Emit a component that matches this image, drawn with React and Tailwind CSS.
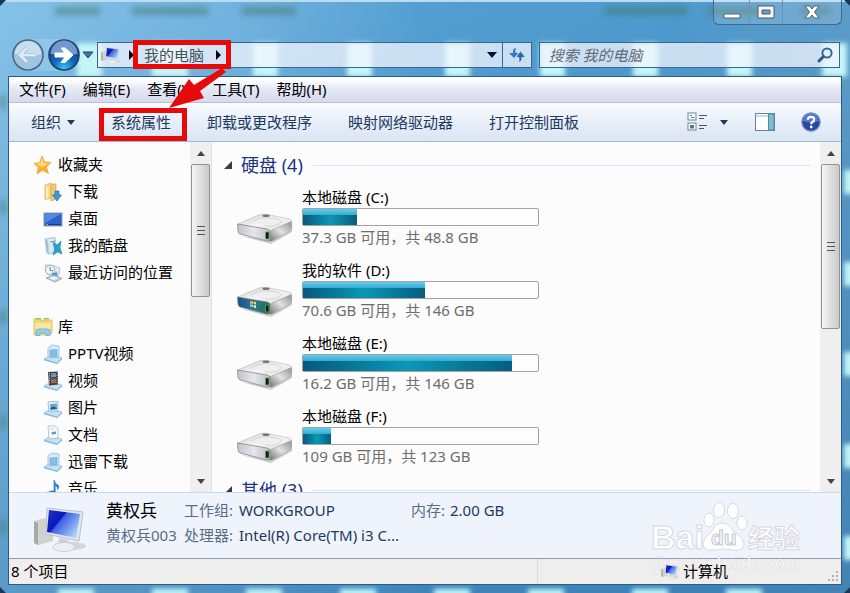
import React from 'react';

const menus = ['文件(F)', '编辑(E)', '查看(V)', '工具(T)', '帮助(H)'];

const favorites = [
  { name: '下载', icon: 'downloads' },
  { name: '桌面', icon: 'desktop' },
  { name: '我的酷盘', icon: 'kupan' },
  { name: '最近访问的位置', icon: 'recent' },
];

const libraries = [
  { name: 'PPTV视频', icon: 'folderLib' },
  { name: '视频', icon: 'video' },
  { name: '图片', icon: 'picture' },
  { name: '文档', icon: 'document' },
  { name: '迅雷下载', icon: 'folderLib' },
  { name: '音乐', icon: 'music' },
];

const drives = [
  { name: '本地磁盘 (C:)', detail: '37.3 GB 可用，共 48.8 GB', used: 23 },
  { name: '我的软件 (D:)', detail: '70.6 GB 可用，共 146 GB', used: 52, system: true },
  { name: '本地磁盘 (E:)', detail: '16.2 GB 可用，共 146 GB', used: 89 },
  { name: '本地磁盘 (F:)', detail: '109 GB 可用，共 123 GB', used: 12 },
];

/* ---------- icons ---------- */

const LibraryBase = () => (
  <>
    <path d="M1 15 L6 12 L19 14 L14 19 Z" fill="#c4e2f5" stroke="#8bb7d6" strokeWidth="0.7" />
    <path d="M1 15 L14 19 L19 14 V15.5 L14 20 L1 16.2 Z" fill="#7fb3da" />
  </>
);

const iconShapes = {
  star: (
    <>
      <path d="M9 1 L11.5 7 L18 7.5 L13.4 12 L15.5 18.5 L9.6 15.2 L4 19 L5.2 12.5 L1 8.6 L6.8 7.4 Z" fill="#fcb02f" stroke="#f0a040" strokeWidth="0.8" />
      <path d="M9 3 L10.8 8 L15 8.4 L9 12 L3 9 L7.4 8 Z" fill="#ffdf80" />
    </>
  ),
  downloads: (
    <>
      <path d="M2 3 L8 1 V16 L2 17.5 Z" fill="#f6dc8c" stroke="#d2b060" strokeWidth="0.7" />
      <path d="M8 2 H13 V17 L8 19 Z" fill="#efcd70" stroke="#cfa94d" strokeWidth="0.7" />
      <path d="M4 5 V16" stroke="#fff4c8" strokeWidth="1.5" />
      <path d="M12 9 H16 V13 H18.5 L14 19 L9.5 13 H12 Z" fill="#3a9ad9" stroke="#2174b4" strokeWidth="0.7" />
    </>
  ),
  desktop: (
    <>
      <rect x="1" y="4" width="18" height="13" fill="#2f62c9" stroke="#8a9fbd" />
      <path d="M2 5 H18 L2 14 Z" fill="#5288e6" />
      <path d="M2 15.5 H18" stroke="#1c3a80" />
      <path d="M3 15.5 H5" stroke="#67c46b" />
    </>
  ),
  kupan: (
    <>
      <path d="M2 3 L12 1.5 L14 16 L5 18 Z" fill="#dbe8f1" stroke="#9cb2c4" strokeWidth="0.8" />
      <path d="M2 3 L5 5 L6 18 L3 16 Z" fill="#a9bed0" />
      <path d="M7 6 L12 5" stroke="#7d9bb5" />
      <path d="M10 6 L14 9 L18 5 L17 11.5 L19 18 L14.5 16 L10 19 L11.5 13 Z" fill="#26a5c4" stroke="#168aa8" strokeWidth="0.6" />
    </>
  ),
  recent: (
    <>
      <path d="M2 2 H9 L17 5 L16 12 L5 12 Z" fill="#dfe9ee" stroke="#b0bec6" strokeWidth="0.8" />
      <circle cx="7" cy="7" r="4.6" fill="#eff7fa" stroke="#9db3c0" strokeWidth="1" />
      <path d="M7 4 V7 L10 8" fill="none" stroke="#5c7c90" strokeWidth="1" />
      <path d="M8 10 L14 8.5 L15 13 L9 14.5 Z" fill="#4b9cc6" stroke="#ccd9e0" />
      <path d="M3 15 L11 12 L19 15.5 L12 19 Z" fill="#c7d2d8" stroke="#8d9ba4" strokeWidth="0.8" />
      <path d="M6 15 L11 13.5 L15 15 L11 17 Z" fill="#eff4f6" />
    </>
  ),
  library: (
    <>
      <path d="M1 2 L5 1 L7 3 H19 V16 L16 18 H1 Z" fill="#f1d57d" stroke="#d9ba62" strokeWidth="0.8" />
      <path d="M3 1.8 H8 M11 1.8 H16" stroke="#9cc56b" strokeWidth="1.5" />
      <path d="M2 6 H18 V12 H2 Z" fill="#fae7a0" />
      <path d="M3 18.5 V14.5 Q3 12 6 12 H14 Q17 12 17 14.5 V18.5 H13 V16 H7 V18.5 Z" fill="#93cdee" stroke="#6aadd6" strokeWidth="0.8" />
    </>
  ),
  folderLib: (
    <>
      <LibraryBase />
      <path d="M5 4 L9 1 L16 2 V13 L8 14 L5 13 Z" fill="#d6ebf9" stroke="#93bbd6" strokeWidth="0.8" />
      <path d="M7 6 L14 5.5 V12.5 L7 13 Z" fill="#82bee6" stroke="#6aa6d0" strokeWidth="0.6" />
    </>
  ),
  video: (
    <>
      <LibraryBase />
      <path d="M5 1 L15 0.5 V13.5 L6 14.5 Z" fill="#3a3f4b" />
      <path d="M8 2.5 L13 2 V6 L8 6.5 Z" fill="#7194b5" />
      <path d="M8 8 L13 7.5 V12 L8 12.5 Z" fill="#a5654b" />
      <path d="M6.5 2 V14 M14.2 1.5 V13" stroke="#dfe4ea" strokeWidth="1" strokeDasharray="1 1.4" />
    </>
  ),
  picture: (
    <>
      <LibraryBase />
      <path d="M5 4 L15 3.5 V12.5 L6 13.5 Z" fill="#f1f8fd" stroke="#84aecd" strokeWidth="0.8" />
      <path d="M7 6 L14 5.5 V11 L7.5 11.8 Z" fill="#66a9d6" />
      <path d="M7.3 10 L10 8.5 L14 10 V11 L7.5 11.8 Z" fill="#2c5975" />
    </>
  ),
  document: (
    <>
      <LibraryBase />
      <path d="M5 1 L12 1 L15 3.5 V13 L6 14 Z" fill="#f6fafd" stroke="#a5bccd" strokeWidth="0.8" />
      <path d="M7 4 H11" stroke="#b5c8d6" strokeWidth="0.8" />
      <path d="M8.5 7 L13 6.5 V9 L9 9.5 Z" fill="#6b97be" />
    </>
  ),
  music: (
    <>
      <LibraryBase />
      <path d="M11 13 V1 Q12 5 15.5 6.5 Q16.5 9 14.5 10.5 Q15 7.5 12.2 6.5 V13.5" fill="#2f83bf" stroke="#2f83bf" strokeWidth="0.7" />
      <ellipse cx="9.5" cy="13.8" rx="3.2" ry="2.3" fill="#2a7bb8" />
    </>
  ),
};

const Icon = ({ name }) => (
  <svg viewBox="0 0 20 20" className="size-5 shrink-0" aria-hidden="true">
    {iconShapes[name]}
  </svg>
);

const ComputerIcon = ({ className, id }) => (
  <svg viewBox="0 0 54 46" className={className} aria-hidden="true">
    <defs>
      <linearGradient id={id} x1="0" y1="0" x2="1" y2="0.7">
        <stop offset="0" stopColor="#1c34c4" />
        <stop offset="0.42" stopColor="#0b18bd" />
        <stop offset="0.46" stopColor="#3c5ee2" />
        <stop offset="1" stopColor="#a9d3f8" />
      </linearGradient>
    </defs>
    <ellipse cx="38" cy="39" rx="15" ry="4" fill="#d3d6da" />
    <path d="M1 14 L12 11 L20 14 V34 L6 38 L1 36 Z" fill="#d2d3ce" />
    <path d="M1 14 L5 16 V38 L1 36 Z" fill="#a7a9a4" />
    <path d="M14 1 L50 5 L46 34 L13 27 Z" fill="#dfe5ee" stroke="#bcc2cc" strokeWidth="1" />
    <path d="M16 3 L47 7 L43 31 L14 25 Z" fill={`url(#${id})`} />
    <path d="M26 31 L36 33 L36 39 L25 38 Z" fill="#cdd1d7" />
    <ellipse cx="31" cy="40" rx="11" ry="4.5" fill="#eceef1" stroke="#c3c7ce" strokeWidth="0.8" />
  </svg>
);

const DriveIcon = ({ system, id }) => (
  <svg viewBox="0 0 58 34" className="w-[58px] h-[34px]" aria-hidden="true">
    <defs>
      <linearGradient id={`${id}-top`} x1="0" y1="0" x2="1" y2="1">
        <stop offset="0" stopColor="#cfcfcf" />
        <stop offset="0.5" stopColor="#f5f5f5" />
        <stop offset="1" stopColor="#dedede" />
      </linearGradient>
      <linearGradient id={`${id}-front`} x1="0" y1="0" x2="1" y2="0">
        <stop offset="0" stopColor={system ? '#1d4f88' : '#c2c2ca'} />
        <stop offset="0.5" stopColor={system ? '#2c7896' : '#e6e6ed'} />
        <stop offset="1" stopColor={system ? '#1c7347' : '#bcc0bc'} />
      </linearGradient>
      <linearGradient id={`${id}-side`} x1="0" y1="1" x2="1" y2="0">
        <stop offset="0" stopColor="#707070" />
        <stop offset="0.5" stopColor="#e2e2e2" />
        <stop offset="1" stopColor="#909090" />
      </linearGradient>
    </defs>
    <path d="M5 24 L35 32 L56 20 L56 13 L34 28 Z" fill="#000" opacity="0.18" />
    <path d="M2 12 L23 3 Q27 1.5 31 2.5 L53 7 Q56 8 55 10 L34 19 Q32 20 29 19 Z" fill={`url(#${id}-top)`} stroke="#b3b3b3" strokeWidth="0.6" />
    <path d="M16 10 Q22 5 34 6 Q46 7 45 10 Q42 15 29 14" fill="#efefef" stroke="#cdcdcd" strokeWidth="0.8" />
    <ellipse cx="30" cy="3.8" rx="3.6" ry="1.3" fill="#777" />
    <path d="M34 19 L55.5 9.5 Q56.5 17 54 19 L37 28.5 Q34 30 33 28 Z" fill={`url(#${id}-side)`} stroke="#999" strokeWidth="0.5" />
    <path d="M1.5 12 L31 17 Q34 17.5 34 20 V27 Q34 29.5 31 29 L4 22 Q2 21 2 19 Z" fill={`url(#${id}-front)`} stroke="#7c7c7c" strokeWidth="0.7" />
    <path d="M29.5 20 H33 V27 H29.5 Z" fill="#161b16" stroke="#61a565" strokeWidth="0.8" />
    {system && (
      <>
        <path d="M14 16 L17 16.5 V19 L14 18.4 Z" fill="#ffb44a" />
        <path d="M17.7 16.7 L20 17.1 V19.6 L17.7 19.1 Z" fill="#c7ee6c" />
        <path d="M14 19.2 L17 19.8 V22.2 L14 21.5 Z" fill="#7fd1f2" />
        <path d="M17.7 19.9 L20 20.4 V23 L17.7 22.4 Z" fill="#fff08a" />
      </>
    )}
  </svg>
);

const Caret = ({ className }) => (
  <svg viewBox="0 0 10 6" className={className} aria-hidden="true">
    <path d="M0 0 H10 L5 6 Z" fill="currentColor" />
  </svg>
);

const RightCaret = () => (
  <svg viewBox="0 0 5 10" className="w-[5px] h-[10px] shrink-0" aria-hidden="true">
    <path d="M0 0 L5 5 L0 10 Z" fill="#000" />
  </svg>
);

/* ---------- desktop seen through the glass frame ---------- */

const Wallpaper = () => (
  <svg viewBox="0 0 850 593" preserveAspectRatio="none" className="absolute inset-0 -z-10 w-full h-full" aria-hidden="true">
    <defs>
      <linearGradient id="sky" x1="0" y1="0" x2="1" y2="0">
        <stop offset="0" stopColor="#84c2e8" />
        <stop offset="0.3" stopColor="#70b1de" />
        <stop offset="0.5" stopColor="#539fd2" />
        <stop offset="0.8" stopColor="#4f9acd" />
        <stop offset="1" stopColor="#5c9cc9" />
      </linearGradient>
      <linearGradient id="depth" x1="0" y1="0" x2="0" y2="1">
        <stop offset="0" stopColor="#1c5f98" stopOpacity="0" />
        <stop offset="1" stopColor="#1c5f98" stopOpacity="0.4" />
      </linearGradient>
      <filter id="soft" x="-50%" y="-50%" width="200%" height="200%"><feGaussianBlur stdDeviation="2.5" /></filter>
      <filter id="smudge" x="-50%" y="-100%" width="200%" height="300%"><feGaussianBlur stdDeviation="3" /></filter>
    </defs>
    <rect width="850" height="593" fill="url(#sky)" />
    <rect width="850" height="593" fill="url(#depth)" />
    <g filter="url(#soft)" fill="#c4f6f8">
      {[77, 152, 253, 347, 445, 540, 633, 727, 822].map((x) => (
        <rect key={x} x={x} y="43" width={x === 152 ? 36 : 25} height="34" />
      ))}
      {[58, 152, 246, 340, 434, 528, 632, 726].map((x) => (
        <rect key={x} x={x} y="589" width="36" height="8" />
      ))}
      {[170, 262, 352, 444, 536].map((y) => (
        <rect key={y} x="844" y={y} width="10" height="24" />
      ))}
    </g>
    <g filter="url(#smudge)" fill="#3f7365" opacity="0.5">
      {[[55, 45], [132, 76], [242, 54], [605, 82], [708, 60], [800, 30]].map(([x, w]) => (
        <rect key={x} x={x} y="7" width={w} height="8" />
      ))}
      {[95, 200, 310, 415, 520].map((y) => (
        <rect key={y} x="0" y={y} width="6" height="14" />
      ))}
    </g>
    <path d="M0 1 H850" stroke="#b9dcf0" strokeWidth="2" />
    <path d="M0 6 V0 H6 Z M844 0 H850 V6 Z M0 587 V593 H6 Z M850 587 V593 H844 Z" fill="#1d3558" />
  </svg>
);

/* ---------- window parts ---------- */

const CaptionButtons = () => (
  <div className="flex h-[25px] w-[129px] rounded-b-md border border-t-0 border-[#41698c] bg-white/15 divide-x divide-[#6e94b2]">
    <button aria-label="最小化" className="w-9 flex items-center justify-center">
      <svg viewBox="0 0 18 14" className="w-[18px] h-[14px]"><rect x="1" y="9" width="16" height="4" fill="#fff" stroke="#5b6775" /></svg>
    </button>
    <button aria-label="最大化" className="w-[33px] flex items-center justify-center">
      <svg viewBox="0 0 18 14" className="w-[18px] h-[14px]">
        <path d="M1 1 H17 V13 H1 Z M5 5 V9 H13 V5 Z" fill="#f4f6f8" fillRule="evenodd" stroke="#4d5b6a" />
      </svg>
    </button>
    <button aria-label="关闭" className="flex-1 flex items-center justify-center">
      <svg viewBox="0 0 16 14" className="w-4 h-[14px]">
        <path d="M1 1 H5.5 L8 4 L10.5 1 H15 L10.5 7 L15 13 H10.5 L8 10 L5.5 13 H1 L5.5 7 Z" fill="#fff" stroke="#56616e" />
      </svg>
    </button>
  </div>
);

const NavButtons = () => (
  <div className="flex items-center gap-1 rounded-full bg-white/15 shrink-0">
    <button aria-label="后退">
      <svg viewBox="0 0 32 32" className="size-8">
        <circle cx="16" cy="16" r="15" fill="#9fc5df" stroke="#4a6782" strokeWidth="1.6" />
        <path d="M3 15 A13 13 0 0 1 29 15 Q16 19 3 15" fill="#d5e6f2" opacity="0.75" />
        <path d="M15 9 L8 16 L15 23 M8.5 16 H24" fill="none" stroke="#8fb0c8" strokeWidth="4" />
        <path d="M15 9 L8 16 L15 23 M8.5 16 H24" fill="none" stroke="#dcebf5" strokeWidth="3" />
      </svg>
    </button>
    <button aria-label="前进">
      <svg viewBox="0 0 32 32" className="size-8">
        <defs>
          <radialGradient id="fwd" cx="0.5" cy="0.95" r="0.75">
            <stop offset="0" stopColor="#35c6f6" />
            <stop offset="0.5" stopColor="#1565bb" />
            <stop offset="1" stopColor="#103f8e" />
          </radialGradient>
        </defs>
        <circle cx="16" cy="16" r="15" fill="url(#fwd)" stroke="#203f6b" strokeWidth="1.6" />
        <path d="M2.5 15 A13.5 13.5 0 0 1 29.5 15 Q16 17 2.5 15" fill="#a9c8ec" opacity="0.65" />
        <path d="M7 14 H17 L13 9 H17 L25 16 L17 23.5 H13 L17 18 H7 Z" fill="#fff" stroke="#fff" strokeLinejoin="round" />
      </svg>
    </button>
  </div>
);

const AddressRow = () => (
  <div className="flex items-center h-[34px] pl-3 pr-[10px]">
    <NavButtons />
    <button aria-label="最近浏览的位置" className="px-[2px] mr-px">
      <svg viewBox="0 0 12 8" className="w-3 h-2"><path d="M1 1 H11 L6 7 Z" fill="#3d739e" stroke="#1f4b74" /></svg>
    </button>
    <div className="flex flex-[435] h-[26px] border border-[#39678f] bg-[#f3f6fe]/75">
      <div className="flex flex-1 items-center pl-[3px]">
        <ComputerIcon id="addrScreen" className="w-5 h-[17px] mr-2" />
        <RightCaret />
        {/* highlighted crumb */}
        <div className="relative flex items-center ml-[10px]">
          <button className="text-[15px] leading-5 text-[#4a4f5a] whitespace-nowrap mr-3">我的电脑</button>
          <RightCaret />
          <div className="absolute -left-[11px] -right-[10px] -top-[5px] -bottom-1 border-[5px] border-[#e60a0a]" />
        </div>
        <button aria-label="以前的位置" className="ml-auto mr-[5px]">
          <Caret className="w-[10px] h-[6px] text-[#0b0b3c]" />
        </button>
      </div>
      <button aria-label="刷新" className="w-[29px] border-l border-[#39678f] flex items-center justify-center">
        <svg viewBox="0 0 18 16" className="w-[18px] h-4">
          <path d="M8 1 Q4.5 1.5 5 6 H1 L6 11 L10.5 6 H7.6 Q7 3.5 8 1 Z" fill="#3a77c2" />
          <path d="M11 15 Q14 14 13.5 10 H16.8 L12.6 4.5 L8.5 10 H11 Q12 13 11 15 Z" fill="#2a67b4" />
        </svg>
      </button>
    </div>
    <label className="flex flex-[301] min-w-0 items-center h-[26px] ml-[7px] border border-[#39678f] bg-[#f3f6fe]/75">
      <input
        type="text"
        aria-label="搜索"
        placeholder="搜索 我的电脑"
        className="flex-1 min-w-0 h-full px-[9px] bg-transparent text-[15px] italic outline-none placeholder:text-[#666d78]"
      />
      <svg viewBox="0 0 16 16" className="size-4 mr-[6px]" aria-hidden="true">
        <circle cx="10" cy="6" r="4.6" fill="#e4f0f8" stroke="#366a93" strokeWidth="2" />
        <path d="M6.5 9.5 L2 14" stroke="#2f5a82" strokeWidth="3" strokeLinecap="round" />
      </svg>
    </label>
  </div>
);

const Toolbar = () => (
  <div className="flex items-center h-[39px] shrink-0 pl-[22px] pr-5 border-b border-[#a9b8ce] bg-linear-to-b from-[#fafcff] via-[#e7eff9] via-50% to-[#dae5f3] text-[15px] text-[#1e395b] whitespace-nowrap">
    <button className="flex items-center gap-[6px]">
      组织 <Caret className="w-2 h-[5px]" />
    </button>
    <div className="relative ml-9">
      <button>系统属性</button>
      <div className="absolute -left-3 -right-4 -top-[3px] -bottom-2 border-[5px] border-[#e60a0a]" />
    </div>
    <button className="ml-9">卸载或更改程序</button>
    <button className="ml-9">映射网络驱动器</button>
    <button className="ml-9">打开控制面板</button>
    <div className="flex items-center ml-auto">
      <button aria-label="更改您的视图" className="flex items-center gap-3">
        <svg viewBox="0 0 21 20" className="w-[21px] h-5">
          <rect x="1" y="1" width="8" height="7" fill="#fff" stroke="#6b859c" />
          <path d="M3 3.5 H5 M4 5.5 H7.5" stroke="#3890b0" />
          <rect x="1" y="11" width="8" height="7" fill="#fff" stroke="#6b859c" />
          <rect x="3" y="13" width="4" height="3.5" fill="#468065" />
          <path d="M12 3.5 H20 M12 6.5 H17 M12 13.5 H20 M12 16.5 H17" stroke="#45566a" />
        </svg>
        <Caret className="w-2 h-[5px]" />
      </button>
      <button aria-label="显示预览窗格" className="ml-[27px]">
        <svg viewBox="0 0 20 18" className="w-5 h-[18px] block">
          <rect x="0.5" y="0.5" width="19" height="17" fill="#fff" stroke="#64829f" />
          <path d="M1 3 H14" stroke="#9fb4c8" />
          <rect x="13.5" y="1" width="5.5" height="16" fill="#7fbccf" stroke="#4f8ba5" />
        </svg>
      </button>
      <button aria-label="获取帮助" className="ml-[26px]">
        <svg viewBox="0 0 20 20" className="size-5 block">
          <circle cx="10" cy="10" r="9.2" fill="#2447a8" stroke="#8195b8" strokeWidth="1.2" />
          <path d="M2 9 A8 8 0 0 1 18 9 Q10 12 2 9" fill="#6686d2" opacity="0.8" />
          <path d="M6.8 7.8 Q7 4.8 10 4.8 Q13.2 4.8 13.2 7.4 Q13.2 9 11.4 10 Q10.2 10.7 10.2 12.2" fill="none" stroke="#fff" strokeWidth="2.2" />
          <circle cx="10.2" cy="15" r="1.4" fill="#fff" />
        </svg>
      </button>
    </div>
  </div>
);

const ScrollBar = ({ thumb, className }) => (
  <div className={`flex flex-col items-center shrink-0 bg-[#efefef] text-[#444] ${className}`} aria-hidden="true">
    <div className="h-[22px] flex items-center">
      <Caret className="w-2 h-[5px] rotate-180" />
    </div>
    <div
      className="w-[19px] flex flex-col items-center justify-center gap-[3px] rounded-[2px] border border-[#929292] bg-linear-to-r from-[#f6f6f6] to-[#c9c9cb]"
      style={{ height: `${thumb}%` }}
    >
      <span className="w-2 h-px bg-[#555]" />
      <span className="w-2 h-px bg-[#555]" />
      <span className="w-2 h-px bg-[#555]" />
    </div>
    <div className="h-[22px] flex items-center mt-auto">
      <Caret className="w-2 h-[5px]" />
    </div>
  </div>
);

const NavGroup = ({ title, icon, items }) => (
  <section>
    <a href="#" className="flex items-center h-[27px] pl-6 gap-[5px]">
      <Icon name={icon} />
      {title}
    </a>
    <ul>
      {items.map((item) => (
        <li key={item.name}>
          <a href="#" className="flex items-center h-[27px] pl-[34px] gap-[5px] whitespace-nowrap">
            <Icon name={item.icon} />
            {item.name}
          </a>
        </li>
      ))}
    </ul>
  </section>
);

const GroupHeading = ({ children }) => (
  <div className="flex items-center h-6 pl-3 pr-[9px]">
    <svg viewBox="0 0 8 8" className="size-2 mr-[9px]" aria-hidden="true">
      <path d="M8 0 V8 H0 Z" fill="#3b3b3b" />
    </svg>
    <h2 className="text-[18px] leading-6 text-[#1e3287] whitespace-nowrap mr-[10px]">{children}</h2>
    <span className="flex-1 h-px bg-[#dfe3ee]" />
  </div>
);

const Drive = ({ drive, index }) => (
  <li className="flex items-start h-[73px] pl-6">
    <div className="pt-[26px] mr-2">
      <DriveIcon id={`drive${index}`} system={drive.system} />
    </div>
    <div>
      <div className="leading-[22px] text-black">{drive.name}</div>
      <div
        role="progressbar"
        aria-label={drive.name}
        aria-valuenow={drive.used}
        className="w-[237px] h-[18px] rounded-[2px] border border-[#a3a3a3] bg-[#fdfdfd]"
      >
        <div
          className="flex flex-col h-full"
          style={{ width: `${drive.used}%` }}
        >
          <div className="h-[6px] bg-linear-to-b from-[#62cdea] to-[#35abd0]" />
          <div className="flex-1 bg-linear-to-r from-[#07597f] via-[#0b98b4] to-[#075d80]" />
        </div>
      </div>
      <div className="leading-[22px] text-[#6d6d6d]">{drive.detail}</div>
    </div>
  </li>
);

const Watermark = () => (
  <svg viewBox="0 0 156 80" className="absolute right-[38px] bottom-[3px] w-[156px] h-20" aria-hidden="true">
    <g fill="#fff" stroke="#d6d9df" strokeWidth="1">
      <text x="4" y="48" className="font-['Liberation_Sans',sans-serif] font-bold text-[34px]">Bai</text>
      <text x="101" y="47" className="font-['Noto_Sans_CJK_SC',sans-serif] font-bold text-[26px]">经验</text>
      <path d="M75 22 Q82 22 86 30 Q98 38 97 44 Q95 51 86 49 Q77 47 68 49 Q57 51 56 43 Q56 38 65 30 Q69 22 75 22 Z" />
      <ellipse cx="72" cy="9" rx="5.5" ry="7.5" />
      <ellipse cx="86" cy="10" rx="5.5" ry="7.5" />
      <ellipse cx="62" cy="19" rx="5" ry="7" />
      <ellipse cx="95" cy="22" rx="5" ry="7" />
      <text x="64" y="44" fill="#f3f5fa" stroke="#c6cad2" className="font-['Liberation_Sans',sans-serif] font-bold text-[21px]">du</text>
    </g>
    <text x="8" y="68" fill="#fff" stroke="#dcdcdf" strokeWidth="0.5" className="font-['Liberation_Sans',sans-serif] text-[18px]">jingyan.baidu.com</text>
  </svg>
);

const Arrow = () => (
  <svg viewBox="0 0 60 42" className="absolute left-[168px] top-[67px] w-[60px] h-[42px]" aria-hidden="true">
    <path d="M54 1 L58 5 L32 24 L36 31 L1 41 L21 12 L26 18 Z" fill="#e60a0a" />
  </svg>
);

const App = () => (
  <div className="relative isolate flex flex-col h-screen overflow-hidden px-2 pb-2 font-['Noto_Sans','Noto_Sans_CJK_SC',sans-serif] text-[15px] text-black">
    <Wallpaper />

    <header className="-mx-2 h-[76px] shrink-0">
      <div className="flex justify-end h-[38px] pr-2">
        <CaptionButtons />
      </div>
      <AddressRow />
    </header>

    <div className="relative flex flex-col flex-1 min-h-0 border border-[#2f5a85] bg-[#fcfcfc]">
      <nav className="flex items-center h-[26px] shrink-0 pl-[10px] gap-[17px] border-b border-[#b9c0d4] bg-linear-to-b from-white from-10% via-[#e6e9f5] via-45% to-[#d6daeb] text-[15px] whitespace-nowrap">
        {menus.map((menu) => (
          <button key={menu}>{menu}</button>
        ))}
      </nav>
      <Toolbar />

      <div className="flex flex-1 min-h-0 overflow-hidden">
        <aside className="flex w-[203px] shrink-0 border-r border-[#d6e1f0]">
          <div className="flex-1 pt-[9px] space-y-[27px] overflow-hidden">
            <NavGroup title="收藏夹" icon="star" items={favorites} />
            <NavGroup title="库" icon="library" items={libraries} />
          </div>
          <ScrollBar thumb={38} className="w-[21px]" />
        </aside>
        <main className="flex-1 pt-[11px] overflow-hidden">
          <GroupHeading>硬盘 (4)</GroupHeading>
          <ul className="pt-[9px]">
            {drives.map((drive, i) => (
              <Drive key={drive.name} drive={drive} index={i} />
            ))}
          </ul>
          <GroupHeading>其他 (3)</GroupHeading>
        </main>
        <ScrollBar thumb={47} className="w-[21px]" />
      </div>

      <section className="flex h-[66px] shrink-0 pl-6 border-t border-[#cfd9e8] bg-[#eff3fc] whitespace-nowrap">
        <ComputerIcon id="pcScreen" className="w-[54px] h-[46px] mt-[14px]" />
        <div className="ml-[19px] pt-[5px] w-[78px]">
          <div className="text-[17px] leading-[25px]">黄权兵</div>
          <div className="leading-[25px] text-[#5a6b85]">黄权兵003</div>
        </div>
        <dl className="grid grid-cols-[55px_172px_39px_auto] content-start pt-[5px] leading-[25px] text-[#1e395b]">
          <dt className="text-[#5a6b85]">工作组:</dt>
          <dd>WORKGROUP</dd>
          <dt className="text-[#5a6b85]">内存:</dt>
          <dd>2.00 GB</dd>
          <dt className="text-[#5a6b85]">处理器:</dt>
          <dd>Intel(R) Core(TM) i3 C...</dd>
        </dl>
      </section>

      <footer className="grid grid-cols-[528fr_304fr] items-stretch h-[26px] shrink-0 border-t border-[#8e9bac] bg-[#f0eded]">
        <span className="flex items-center pl-[2px]">8 个项目</span>
        <span className="flex items-center relative z-10 pl-[123px] gap-1 border-l border-[#dcd9d9]">
          <ComputerIcon id="statusScreen" className="w-[18px] h-4" />
          计算机
          <svg viewBox="0 0 12 12" className="size-3 ml-auto mr-[2px] mt-2" aria-hidden="true">
            <path d="M9 1 h2 v2 h-2 Z M5 5 h2 v2 h-2 Z M9 5 h2 v2 h-2 Z M1 9 h2 v2 h-2 Z M5 9 h2 v2 h-2 Z M9 9 h2 v2 h-2 Z" fill="#b3b1b1" />
          </svg>
        </span>
      </footer>
      <Watermark />
    </div>

    <Arrow />
  </div>
);

export default App;
